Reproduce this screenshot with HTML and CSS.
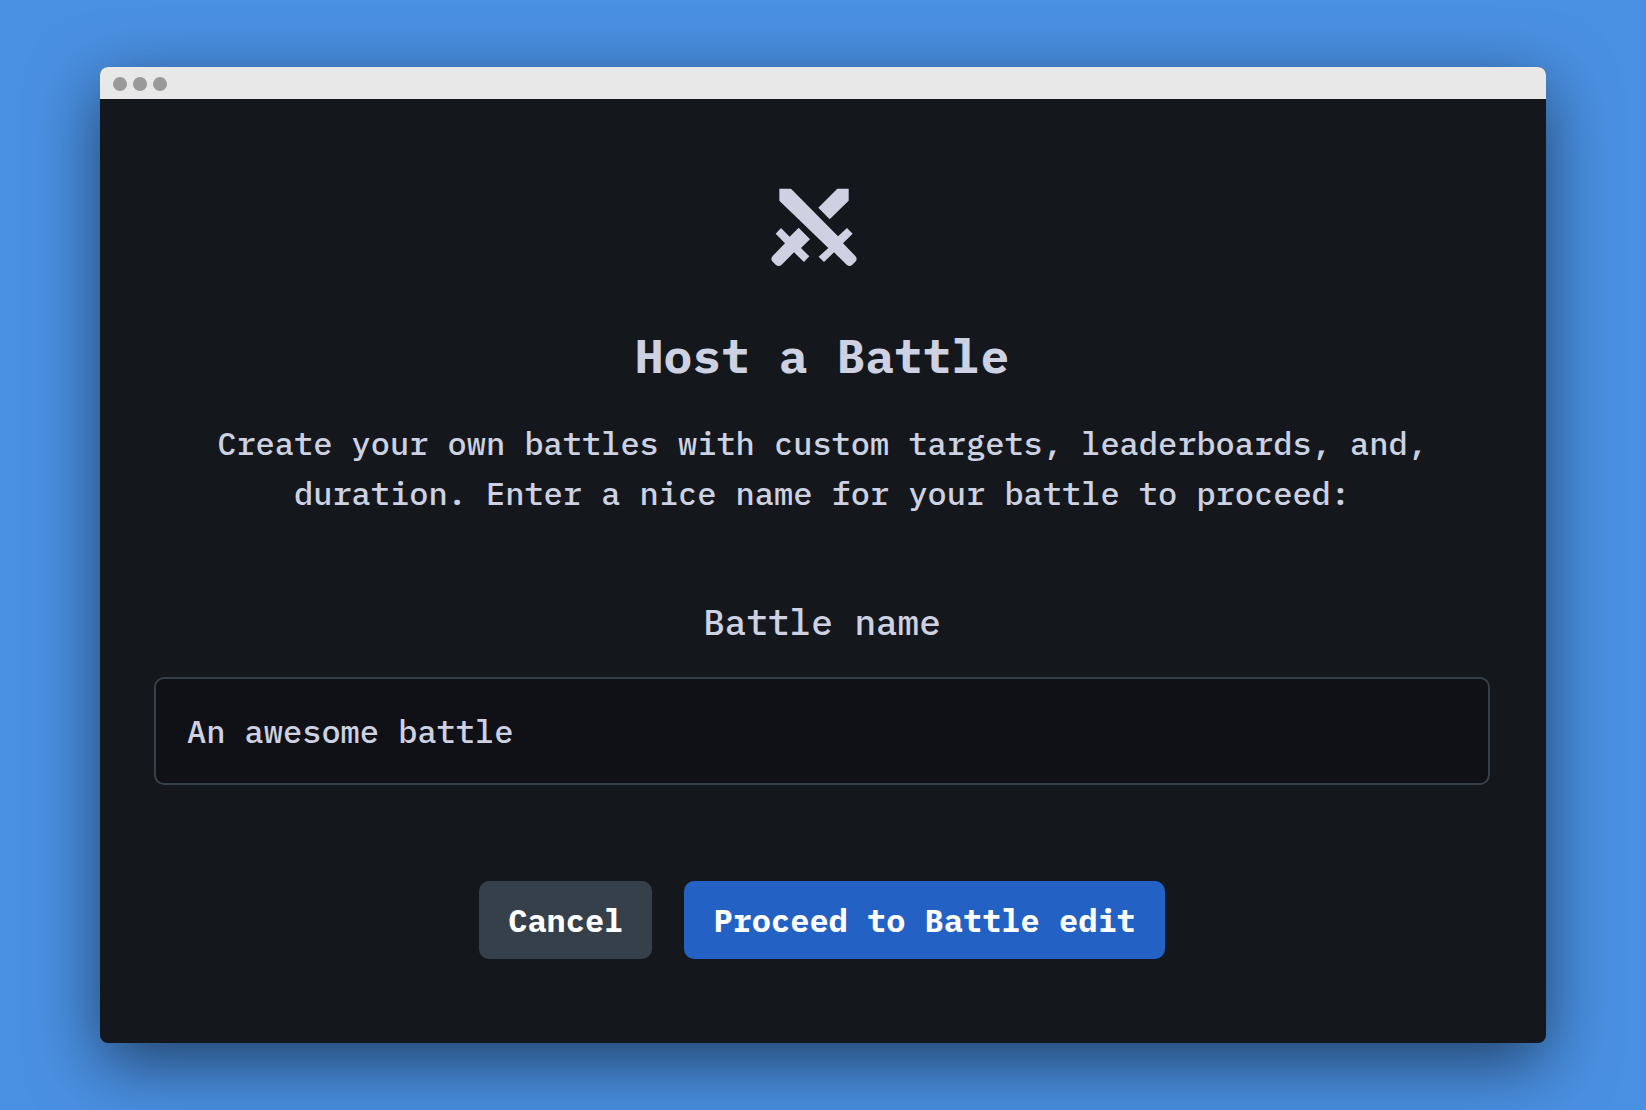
FILE: index.html
```html
<!DOCTYPE html>
<html lang="en">
<head>
<meta charset="utf-8">
<meta name="viewport" content="width=device-width, initial-scale=1">
<title>Host a Battle</title>
<link rel="stylesheet" href="styles.css">
</head>
<body>
<main class="window">
  <div class="titlebar">
    <span class="dot"></span>
    <span class="dot"></span>
    <span class="dot"></span>
  </div>
  <form class="dialog">
    <svg class="icon" viewBox="60 50 264 243" aria-hidden="true">
      <path d="M88 55H123L264 198L291 173L308 190L279 219L316 257Q324 266 316 274L307 283Q299 291 290 283L252 246L222 275L206 259L235 233L88 91Z"/>
      <path d="M262 55H296V91L239 147L205 112Z"/>
      <path d="M93 173L119 199L146 172L180 207L153 233L178 258L162 275L132 246L95 283Q86 291 77 283L68 274Q60 266 68 257L105 219L77 190Z"/>
    </svg>
    <h1 class="title">Host a Battle</h1>
    <p class="intro">Create your own battles with custom targets, leaderboards, and, duration. Enter a nice name for your battle to proceed:</p>
    <label class="label" for="battle-name">Battle name</label>
    <input class="field" id="battle-name" type="text" value="An awesome battle">
    <div class="actions">
      <button class="button" type="button">Cancel</button>
      <button class="button button-primary" type="submit">Proceed to Battle edit</button>
    </div>
  </form>
</main>
</body>
</html>
```

FILE: styles.css
```css
* {
  box-sizing: border-box;
}

body {
  margin: 0;
  min-height: 100vh;
  padding: 67px 100px;
  background: #4a90e2;
  color: #cdd1e1;
  font-family: "IBM Plex Mono", "Liberation Mono", monospace;
  font-size: 32px;
  font-weight: 500;
}

.window {
  overflow: hidden;
  border-radius: 8px;
  background: #14181c;
  box-shadow: 0 20px 68px rgba(0, 0, 0, 0.55);
}

.titlebar {
  display: flex;
  align-items: center;
  gap: 6px;
  height: 32px;
  padding: 2px 13px 0;
  background: #e8e8e8;
}

.dot {
  width: 14px;
  height: 14px;
  border-radius: 50%;
  background: #999;
}

.dialog {
  display: flex;
  flex-direction: column;
  align-items: center;
  padding: 88px 56px 84px 54px;
  text-align: center;
}

.icon {
  width: 88px;
  height: 81px;
  margin: 0 16px 51px 0;
  fill: #cdd1e1;
}

.title {
  margin: 0 0 27px;
  font-size: 48px;
  font-weight: 700;
  line-height: 72px;
}

.intro {
  max-width: 1260px;
  margin: 0 0 77px;
  line-height: 50px;
}

.label {
  margin-bottom: 28px;
  font-size: 36px;
  line-height: 54px;
}

.field {
  width: 100%;
  height: 108px;
  margin-bottom: 96px;
  padding: 0 31px;
  border: 2px solid #36404a;
  border-radius: 10px;
  background: #101116;
  color: inherit;
  font: inherit;
}

.actions {
  display: flex;
  flex-wrap: wrap;
  justify-content: center;
  gap: 32px;
}

.button {
  height: 78px;
  padding: 0 29px;
  border: 0;
  border-radius: 10px;
  background: #36404a;
  color: #fff;
  font: inherit;
  font-weight: 700;
  cursor: pointer;
}

.button-primary {
  background: #2461c4;
}
```
